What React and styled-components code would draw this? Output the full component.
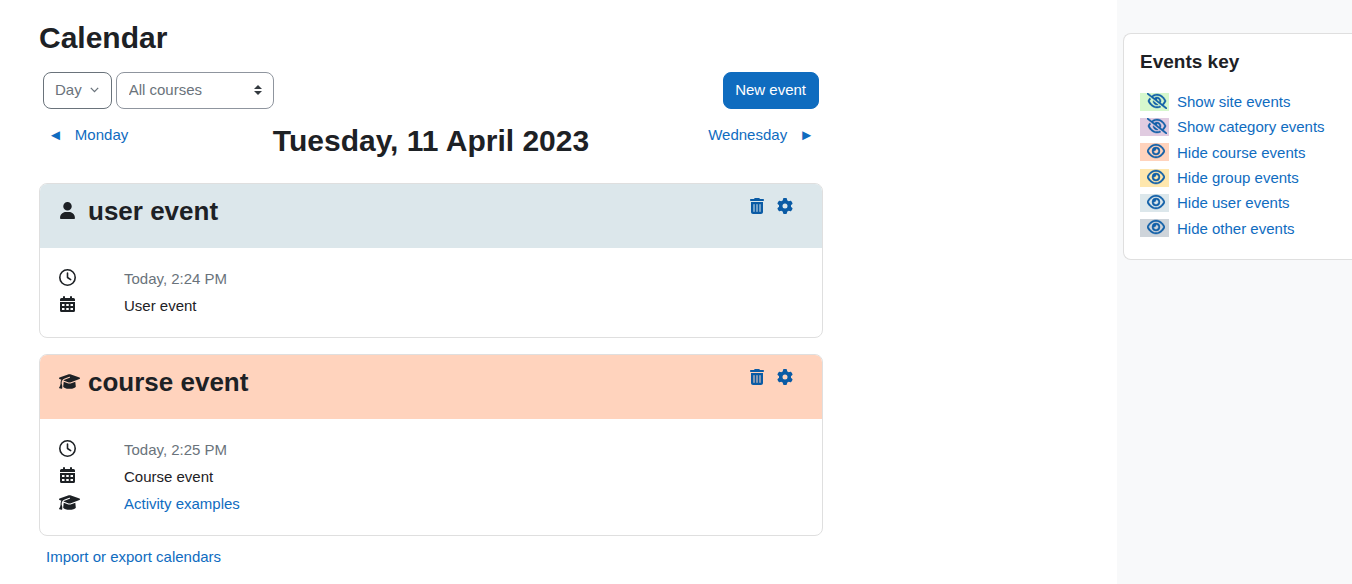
import styled, { createGlobalStyle } from "styled-components";
import {
  FaGear,
  FaGraduationCap,
  FaRegClock,
  FaRegEye,
  FaRegEyeSlash,
  FaTrashCan,
  FaUser,
} from "react-icons/fa6";

const GlobalStyle = createGlobalStyle`
  *, *::before, *::after {
    box-sizing: border-box;
  }

  body {
    margin: 0;
    background: #ffffff;
    color: #1d2125;
    font-family: "Liberation Sans", Arial, sans-serif;
    font-size: 15px;
    line-height: 23px;
  }

  button, select {
    font: inherit;
  }

  h1, h2, h3, h4, p, ul {
    margin: 0;
    padding: 0;
  }
`;

const Page = styled.div`
  display: flex;
  min-height: 100vh;
`;

const Main = styled.main`
  flex: 1;
  min-width: 0;
  padding: 20px 39px 0;
`;

const Content = styled.div`
  max-width: 784px;
`;

const Heading = styled.h1`
  font-size: 30px;
  line-height: 36px;
`;

const Toolbar = styled.div`
  display: flex;
  align-items: center;
  gap: 4px;
  padding: 16px 4px 14px;
`;

const Button = styled.button`
  display: flex;
  align-items: center;
  gap: 8px;
  height: 37px;
  padding: 0 12px 2px 11px;
  margin-left: ${(p) => (p.$primary ? "auto" : 0)};
  border: 1px solid ${(p) => (p.$primary ? "#0f6cbf" : "#6a737b")};
  border-radius: 8px;
  background: ${(p) => (p.$primary ? "#0f6cbf" : "transparent")};
  color: ${(p) => (p.$primary ? "#ffffff" : "#6a737b")};
  cursor: pointer;
`;

const SelectWrap = styled.div`
  position: relative;
  width: 158px;

  svg {
    position: absolute;
    top: 13px;
    right: 12px;
    pointer-events: none;
  }
`;

const Select = styled.select`
  display: block;
  width: 100%;
  height: 37px;
  padding: 0 28px 2px 12px;
  border: 1px solid #8f959e;
  border-radius: 8px;
  background: #ffffff;
  color: #6a737b;
  appearance: none;
`;

const DayNav = styled.nav`
  display: grid;
  grid-template-columns: 1fr auto 1fr;
  align-items: start;
  padding-bottom: 24px;
`;

const DayTitle = styled.h2`
  font-size: 30px;
  line-height: 36px;
`;

const Link = styled.a`
  color: #0f6cbf;
  text-decoration: none;

  &:hover {
    text-decoration: underline;
  }
`;

const DayLink = styled(Link)`
  display: flex;
  gap: 12px;
  padding: 0 9px;
  justify-self: ${(p) => (p.$next ? "end" : "start")};
`;

const EventCard = styled.article`
  margin-bottom: 16px;
  border: 1px solid #dfdfdf;
  border-radius: 8px;
  overflow: hidden;
`;

const EventHeader = styled.header`
  display: flex;
  align-items: flex-start;
  height: 64px;
  padding: 11px 29px 0 19px;
  background: ${(p) => p.$color};
`;

const EventName = styled.h3`
  flex: 1;
  font-size: 26px;
  line-height: 32px;
`;

const IconBox = styled.span`
  display: flex;
  flex: none;
  align-items: center;
  width: ${(p) => p.$width}px;
  height: ${(p) => p.$height || 27}px;
  padding-bottom: 2px;

  svg {
    flex: none;
    height: 17px;
    width: ${(p) => (p.$wide ? 21 : 17)}px;
  }
`;

const Actions = styled.div`
  display: flex;
  gap: 12px;
  padding-top: 3px;
`;

const IconButton = styled.button`
  display: flex;
  padding: 0;
  border: 0;
  background: none;
  color: #0a5ba5;
  font-size: 16px;
  cursor: pointer;
`;

const EventBody = styled.div`
  padding: 17px 19px 18px;
`;

const Detail = styled.div`
  display: flex;
  align-items: center;
  height: 27px;
  color: ${(p) => (p.$muted ? "#6a737b" : "#1d2125")};

  ${IconBox} {
    color: #1d2125;
  }
`;

const Footer = styled.p`
  padding: 0 7px;
  margin-top: -7px;
`;

const Drawer = styled.aside`
  flex: none;
  width: 235px;
  padding: 33px 0 0 6px;
  background: #f8f9fa;
`;

const KeyCard = styled.section`
  padding: 16px 0 18px 16px;
  border: 1px solid #dfdfdf;
  border-right: 0;
  border-radius: 8px 0 0 8px;
  background: #ffffff;
`;

const KeyTitle = styled.h4`
  font-size: 19px;
  line-height: 23px;
`;

const KeyList = styled.ul`
  display: grid;
  grid-auto-rows: 1fr;
  height: 152px;
  margin-top: 16px;
  list-style: none;
`;

const KeyLink = styled(Link)`
  display: flex;
  align-items: center;
  gap: 8px;
  height: 100%;
`;

const Swatch = styled.span`
  display: flex;
  width: 29px;
  height: 18px;
  padding-left: 7px;
  background: ${(p) => p.$color};
  color: #0f5fa8;

  svg {
    flex: none;
    width: ${(p) => (p.$slashed ? 20 : 18)}px;
    height: 16px;
    stroke-width: 14px;
  }
`;

const CalendarIcon = () => (
  <svg viewBox="0 0 17 17" fill="currentColor" aria-hidden="true">
    <path d="M4 1a1 1 0 0 1 2 0v1h5V1a1 1 0 0 1 2 0v1h1.500A1.500 1.500 0 0 1 16 3.500V5H1V3.500A1.500 1.500 0 0 1 2.500 2H4z" />
    <path
      fillRule="evenodd"
      d="M1 6h15v8.500a1.500 1.500 0 0 1-1.500 1.500h-12A1.500 1.500 0 0 1 1 14.500zM3 8v2h2.500V8zm4.250 0v2h2.500V8zm4.250 0v2H14V8zM3 12v2h2.500v-2zm4.250 0v2h2.500v-2zm4.250 0v2H14v-2z"
    />
  </svg>
);

const events = [
  {
    name: "user event",
    color: "#dce7eb",
    icon: <FaUser />,
    time: "Today, 2:24 PM",
    type: "User event",
  },
  {
    name: "course event",
    color: "#ffd3bd",
    icon: <FaGraduationCap />,
    wide: true,
    time: "Today, 2:25 PM",
    type: "Course event",
    course: "Activity examples",
  },
];

const keys = [
  { label: "Show site events", color: "#d6f8cd", hidden: true },
  { label: "Show category events", color: "#e0cbe0", hidden: true },
  { label: "Hide course events", color: "#ffd3bd" },
  { label: "Hide group events", color: "#fee7ae" },
  { label: "Hide user events", color: "#dce7eb" },
  { label: "Hide other events", color: "#ced4da" },
];

const Event = ({ event }) => (
  <EventCard>
    <EventHeader $color={event.color}>
      <IconBox $width={29} $height={32} $wide={event.wide}>
        {event.icon}
      </IconBox>
      <EventName>{event.name}</EventName>
      <Actions>
        <IconButton type="button" aria-label="Delete event">
          <FaTrashCan />
        </IconButton>
        <IconButton type="button" aria-label="Edit event">
          <FaGear />
        </IconButton>
      </Actions>
    </EventHeader>
    <EventBody>
      <Detail $muted>
        <IconBox $width={65}>
          <FaRegClock />
        </IconBox>
        {event.time}
      </Detail>
      <Detail>
        <IconBox $width={65}>
          <CalendarIcon />
        </IconBox>
        {event.type}
      </Detail>
      {event.course && (
        <Detail>
          <IconBox $width={65} $wide>
            <FaGraduationCap />
          </IconBox>
          <Link href="#course">{event.course}</Link>
        </Detail>
      )}
    </EventBody>
  </EventCard>
);

export default function App() {
  return (
    <>
      <GlobalStyle />
      <Page>
        <Main>
          <Content>
            <Heading>Calendar</Heading>
            <Toolbar>
              <Button type="button" aria-haspopup="true">
                Day
                <svg width="9" height="6" viewBox="0 0 9 6" fill="none">
                  <path
                    d="M.8 .9l3.700 3.700L8.200 .9"
                    stroke="currentColor"
                    strokeWidth="1.300"
                  />
                </svg>
              </Button>
              <SelectWrap>
                <Select aria-label="Course" defaultValue="all">
                  <option value="all">All courses</option>
                  <option value="activity">Activity examples</option>
                </Select>
                <svg width="8" height="10" viewBox="0 0 4 5">
                  <path fill="#343a40" d="M2 0L0 2h4zm0 5L0 3h4z" />
                </svg>
              </SelectWrap>
              <Button type="button" $primary>
                New event
              </Button>
            </Toolbar>
            <DayNav>
              <DayLink href="#previous">
                <span aria-hidden="true">◄</span>
                <span>Monday</span>
              </DayLink>
              <DayTitle>Tuesday, 11 April 2023</DayTitle>
              <DayLink href="#next" $next>
                <span>Wednesday</span>
                <span aria-hidden="true">►</span>
              </DayLink>
            </DayNav>
            {events.map((event) => (
              <Event key={event.name} event={event} />
            ))}
            <Footer>
              <Link href="#import">Import or export calendars</Link>
            </Footer>
          </Content>
        </Main>
        <Drawer>
          <KeyCard>
            <KeyTitle>Events key</KeyTitle>
            <KeyList>
              {keys.map((key) => (
                <li key={key.label}>
                  <KeyLink href="#filter">
                    <Swatch $color={key.color} $slashed={key.hidden}>
                      {key.hidden ? <FaRegEyeSlash /> : <FaRegEye />}
                    </Swatch>
                    {key.label}
                  </KeyLink>
                </li>
              ))}
            </KeyList>
          </KeyCard>
        </Drawer>
      </Page>
    </>
  );
}
